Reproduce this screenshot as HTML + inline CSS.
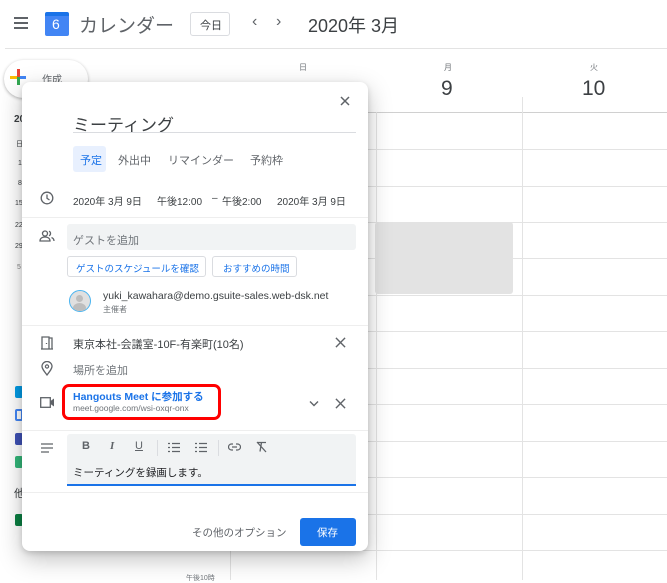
<!DOCTYPE html>
<html><head><meta charset="utf-8"><style>
*{margin:0;padding:0;box-sizing:border-box}
body{width:667px;height:580px;overflow:hidden;background:#fff;font-family:"Liberation Sans","Noto Sans CJK JP",sans-serif;color:#3c4043;position:relative}
.a{position:absolute}
.hl{position:absolute;height:1px;background:#e3e3e3}
.vl{position:absolute;width:1px;background:#e3e3e3}
.t{position:absolute;white-space:nowrap}
.ico{position:absolute}
</style></head><body>
<!-- header -->
<div class="a" style="left:14px;top:17px;width:14px;height:2px;background:#5f6368"></div>
<div class="a" style="left:14px;top:22px;width:14px;height:2px;background:#5f6368"></div>
<div class="a" style="left:14px;top:27px;width:14px;height:2px;background:#5f6368"></div>
<div class="a" style="left:45px;top:12px;width:24px;height:24px;background:#4285f4;border-radius:2px;border-top:4px solid #1a73e8"></div>
<div class="t" style="left:52px;top:16px;color:#fff;font-size:14px">6</div>
<div class="t" style="left:79px;top:11px;font-size:19px;color:#5f6368">カレンダー</div>
<div class="a" style="left:190px;top:12px;width:40px;height:24px;border:1px solid #dadce0;border-radius:3px"></div>
<div class="t" style="left:200px;top:17px;font-size:11px">今日</div>
<div class="t" style="left:252px;top:13px;font-size:16px;color:#5f6368">‹</div>
<div class="t" style="left:276px;top:13px;font-size:16px;color:#5f6368">›</div>
<div class="t" style="left:308px;top:12px;font-size:18px;color:#3c4043">2020年 3月</div>
<div class="hl" style="left:5px;top:48px;width:662px"></div>
<!-- create button -->
<div class="a" style="left:4px;top:60px;width:84px;height:38px;border-radius:20px;box-shadow:0 1px 3px rgba(0,0,0,.3);background:#fff"></div>
<div class="a" style="left:10px;top:76px;width:16px;height:3px;background:linear-gradient(90deg,#fbbc04 50%,#4285f4 50%)"></div>
<div class="a" style="left:17px;top:69px;width:3px;height:16px;background:linear-gradient(#ea4335 50%,#34a853 50%)"></div>
<div class="t" style="left:42px;top:71px;font-size:10px;color:#5f6368">作成</div>
<!-- sidebar bits -->
<div class="t" style="left:14px;top:114px;font-size:10px;font-weight:bold">20</div>
<div class="t" style="left:16px;top:139px;font-size:7px">日</div>
<div class="t" style="left:18px;top:160px;font-size:7px">1</div>
<div class="t" style="left:18px;top:180px;font-size:7px">8</div>
<div class="t" style="left:15px;top:200px;font-size:7px">15</div>
<div class="t" style="left:15px;top:222px;font-size:7px">22</div>
<div class="t" style="left:15px;top:243px;font-size:7px">29</div>
<div class="t" style="left:17px;top:264px;font-size:7px;color:#888">5</div>
<div class="a" style="left:15px;top:386px;width:8px;height:12px;background:#039be5;border-radius:2px"></div>
<div class="a" style="left:15px;top:409px;width:8px;height:12px;border:2px solid #4285f4;border-radius:2px"></div>
<div class="a" style="left:15px;top:433px;width:8px;height:12px;background:#3f51b5;border-radius:2px"></div>
<div class="a" style="left:15px;top:456px;width:8px;height:12px;background:#33b679;border-radius:2px"></div>
<div class="t" style="left:14px;top:485px;font-size:11px">他</div>
<div class="a" style="left:15px;top:514px;width:8px;height:12px;background:#0b8043;border-radius:2px"></div>
<!-- grid -->
<div class="t" style="left:299px;top:62px;font-size:8px;color:#70757a">日</div>
<div class="t" style="left:444px;top:62px;font-size:8px;color:#70757a">月</div>
<div class="t" style="left:441px;top:77px;font-size:21px;color:#3c4043">9</div>
<div class="t" style="left:590px;top:62px;font-size:8px;color:#70757a">火</div>
<div class="t" style="left:582px;top:77px;font-size:21px;color:#3c4043">10</div>
<div class="hl" style="left:230px;top:112px;width:437px;background:#d0d0d0"></div>
<div class="vl" style="left:230px;top:112px;height:468px"></div>
<div class="vl" style="left:376px;top:112px;height:468px"></div>
<div class="vl" style="left:522px;top:97px;height:483px"></div>
<div class="hl" style="left:230px;top:149px;width:437px"></div>
<div class="hl" style="left:230px;top:186px;width:437px"></div>
<div class="hl" style="left:230px;top:222px;width:437px"></div>
<div class="hl" style="left:230px;top:258px;width:437px"></div>
<div class="hl" style="left:230px;top:295px;width:437px"></div>
<div class="hl" style="left:230px;top:331px;width:437px"></div>
<div class="hl" style="left:230px;top:368px;width:437px"></div>
<div class="hl" style="left:230px;top:404px;width:437px"></div>
<div class="hl" style="left:230px;top:441px;width:437px"></div>
<div class="hl" style="left:230px;top:477px;width:437px"></div>
<div class="hl" style="left:230px;top:514px;width:437px"></div>
<div class="hl" style="left:230px;top:550px;width:437px"></div>
<div class="a" style="left:375px;top:222px;width:138px;height:72px;background:#e3e3e3;border-radius:3px"></div>
<div class="t" style="left:186px;top:573px;font-size:7px;color:#70757a">午後10時</div>
<!-- modal -->
<div class="a" style="left:22px;top:82px;width:346px;height:469px;background:#fff;border-radius:8px;box-shadow:0 8px 24px rgba(0,0,0,.25),0 2px 6px rgba(0,0,0,.15)"></div>
<svg class="ico" style="left:339px;top:95px" width="12" height="12" viewBox="0 0 12 12"><path d="M2 2L10 10M10 2L2 10" stroke="#5f6368" stroke-width="1.5"/></svg>
<div class="t" style="left:73px;top:111px;font-size:17px;color:#3c4043">ミーティング</div>
<div class="hl" style="left:73px;top:132px;width:283px;background:#dadce0"></div>
<div class="a" style="left:73px;top:146px;width:33px;height:26px;background:#e8f0fe;border-radius:3px"></div>
<div class="t" style="left:80px;top:152px;font-size:11px;color:#1a73e8">予定</div>
<div class="t" style="left:118px;top:152px;font-size:11px;color:#5f6368">外出中</div>
<div class="t" style="left:168px;top:152px;font-size:11px;color:#5f6368">リマインダー</div>
<div class="t" style="left:250px;top:152px;font-size:11px;color:#5f6368">予約枠</div>
<svg class="ico" style="left:40px;top:191px" width="14" height="14" viewBox="0 0 14 14"><circle cx="7" cy="7" r="5.8" fill="none" stroke="#5f6368" stroke-width="1.3"/><path d="M7 3.5V7.3L9.5 9" fill="none" stroke="#5f6368" stroke-width="1.3"/></svg>
<div class="t" style="left:73px;top:193px;font-size:10px;color:#3c4043">2020年 3月 9日</div>
<div class="t" style="left:157px;top:193px;font-size:10px;color:#3c4043">午後12:00</div>
<div class="t" style="left:212px;top:193px;font-size:10px;color:#3c4043">–</div>
<div class="t" style="left:222px;top:193px;font-size:10px;color:#3c4043">午後2:00</div>
<div class="t" style="left:277px;top:193px;font-size:10px;color:#3c4043">2020年 3月 9日</div>
<div class="hl" style="left:22px;top:217px;width:346px;background:#eee"></div>
<svg class="ico" style="left:39px;top:230px" width="16" height="12" viewBox="0 0 16 12"><circle cx="6" cy="3.5" r="2.5" fill="none" stroke="#5f6368" stroke-width="1.3"/><path d="M1 11c0-3 2.5-4 5-4s5 1 5 4z" fill="none" stroke="#5f6368" stroke-width="1.3"/><path d="M10 1.2a2.5 2.5 0 010 4.6M12.5 7.5c1.5.6 2.5 1.6 2.5 3.5" fill="none" stroke="#5f6368" stroke-width="1.3"/></svg>
<div class="a" style="left:67px;top:224px;width:289px;height:26px;background:#f1f3f4;border-radius:3px"></div>
<div class="t" style="left:73px;top:232px;font-size:11px;color:#70757a">ゲストを追加</div>
<div class="a" style="left:67px;top:256px;width:139px;height:21px;border:1px solid #dadce0;border-radius:3px"></div>
<div class="t" style="left:76px;top:261px;font-size:9.5px;color:#1a73e8">ゲストのスケジュールを確認</div>
<div class="a" style="left:212px;top:256px;width:85px;height:21px;border:1px solid #dadce0;border-radius:3px"></div>
<div class="t" style="left:223px;top:261px;font-size:9.5px;color:#1a73e8">おすすめの時間</div>
<div class="a" style="left:69px;top:290px;width:22px;height:22px;border-radius:50%;border:1.5px solid #4ab4f0;background:#e0e0e0;overflow:hidden"><div class="a" style="left:6px;top:4px;width:7px;height:7px;border-radius:50%;background:#bdbdbd"></div><div class="a" style="left:3px;top:12px;width:13px;height:10px;border-radius:50%;background:#bdbdbd"></div></div>
<div class="t" style="left:103px;top:290px;font-size:10.5px;color:#3c4043">yuki_kawahara@demo.gsuite-sales.web-dsk.net</div>
<div class="t" style="left:103px;top:304px;font-size:8px;color:#70757a">主催者</div>
<div class="hl" style="left:22px;top:325px;width:346px;background:#eee"></div>
<svg class="ico" style="left:40px;top:336px" width="14" height="14" viewBox="0 0 14 14"><path d="M2 13V1h7v12M9 2h3v11M1 13h12M6.5 7v1" fill="none" stroke="#5f6368" stroke-width="1.3"/></svg>
<div class="t" style="left:73px;top:336px;font-size:11px;color:#3c4043">東京本社-会議室-10F-有楽町(10名)</div>
<svg class="ico" style="left:335px;top:337px" width="11" height="11" viewBox="0 0 12 12"><path d="M1 1L11 11M11 1L1 11" stroke="#5f6368" stroke-width="1.5"/></svg>
<svg class="ico" style="left:41px;top:361px" width="12" height="15" viewBox="0 0 12 15"><path d="M6 14C2.5 9.5 1 7.5 1 5.5a5 5 0 0110 0c0 2-1.5 4-5 8.5z" fill="none" stroke="#5f6368" stroke-width="1.3"/><circle cx="6" cy="5.5" r="1.6" fill="none" stroke="#5f6368" stroke-width="1.2"/></svg>
<div class="t" style="left:73px;top:362px;font-size:11px;color:#70757a">場所を追加</div>
<svg class="ico" style="left:40px;top:397px" width="15" height="11" viewBox="0 0 15 11"><rect x="0.7" y="0.7" width="9.6" height="9.6" fill="none" stroke="#5f6368" stroke-width="1.3"/><path d="M10.5 4L14 1.5v8L10.5 7z" fill="#5f6368"/></svg>
<div class="a" style="left:62px;top:384px;width:159px;height:36px;border:3.5px solid #f00;border-radius:7px"></div>
<div class="t" style="left:73px;top:389px;font-size:10.5px;color:#1a73e8;font-weight:bold">Hangouts Meet に参加する</div>
<div class="t" style="left:73px;top:403px;font-size:8.5px;color:#70757a">meet.google.com/wsi-oxqr-onx</div>
<svg class="ico" style="left:309px;top:400px" width="10" height="7" viewBox="0 0 10 7"><path d="M1 1.5L5 5.5L9 1.5" fill="none" stroke="#5f6368" stroke-width="1.4"/></svg>
<svg class="ico" style="left:335px;top:398px" width="11" height="11" viewBox="0 0 12 12"><path d="M1 1L11 11M11 1L1 11" stroke="#5f6368" stroke-width="1.5"/></svg>
<div class="hl" style="left:22px;top:430px;width:346px;background:#eee"></div>
<svg class="ico" style="left:41px;top:443px" width="12" height="10" viewBox="0 0 12 10"><path d="M0 1h12M0 5h12M0 9h8" stroke="#5f6368" stroke-width="1.3"/></svg>
<div class="a" style="left:67px;top:434px;width:289px;height:52px;background:#f1f3f4;border-radius:3px 3px 0 0;border-bottom:2px solid #1a73e8"></div>
<div class="t" style="left:82px;top:440px;font-size:11px;font-weight:bold;color:#5f6368">B</div>
<div class="t" style="left:110px;top:440px;font-size:11px;font-style:italic;font-weight:bold;color:#5f6368;font-family:'Liberation Serif',serif">I</div>
<div class="t" style="left:135px;top:440px;font-size:11px;text-decoration:underline;color:#5f6368">U</div>
<div class="vl" style="left:157px;top:440px;height:16px;background:#dadce0"></div>
<svg class="ico" style="left:168px;top:442px" width="12" height="11" viewBox="0 0 12 11"><path d="M4 1.5h8M4 5.5h8M4 9.5h8M0 1.5h2M0 5.5h2M0 9.5h2" stroke="#5f6368" stroke-width="1.2"/></svg>
<svg class="ico" style="left:195px;top:442px" width="12" height="11" viewBox="0 0 12 11"><path d="M4 1.5h8M4 5.5h8M4 9.5h8M0 1.5h2M0 5.5h2M0 9.5h2" stroke="#5f6368" stroke-width="1.2"/></svg>
<div class="vl" style="left:218px;top:440px;height:16px;background:#dadce0"></div>
<svg class="ico" style="left:228px;top:443px" width="13" height="8" viewBox="0 0 13 8"><path d="M5 1H3.5a3 3 0 000 6H5M8 1h1.5a3 3 0 010 6H8M4 4h5" fill="none" stroke="#5f6368" stroke-width="1.2"/></svg>
<svg class="ico" style="left:256px;top:441px" width="11" height="12" viewBox="0 0 11 12"><path d="M1 1.5h9M5.5 1.5L4 10.5M1 1L10 11" fill="none" stroke="#5f6368" stroke-width="1.3"/></svg>
<div class="t" style="left:73px;top:465px;font-size:10.5px;color:#202124">ミーティングを録画します。</div>
<div class="hl" style="left:22px;top:492px;width:346px;background:#eee"></div>
<div class="t" style="left:192px;top:525px;font-size:10.5px;color:#5f6368">その他のオプション</div>
<div class="a" style="left:300px;top:518px;width:56px;height:28px;background:#1a73e8;border-radius:3px"></div>
<div class="t" style="left:317px;top:525px;font-size:10.5px;color:#fff">保存</div>
</body></html>
